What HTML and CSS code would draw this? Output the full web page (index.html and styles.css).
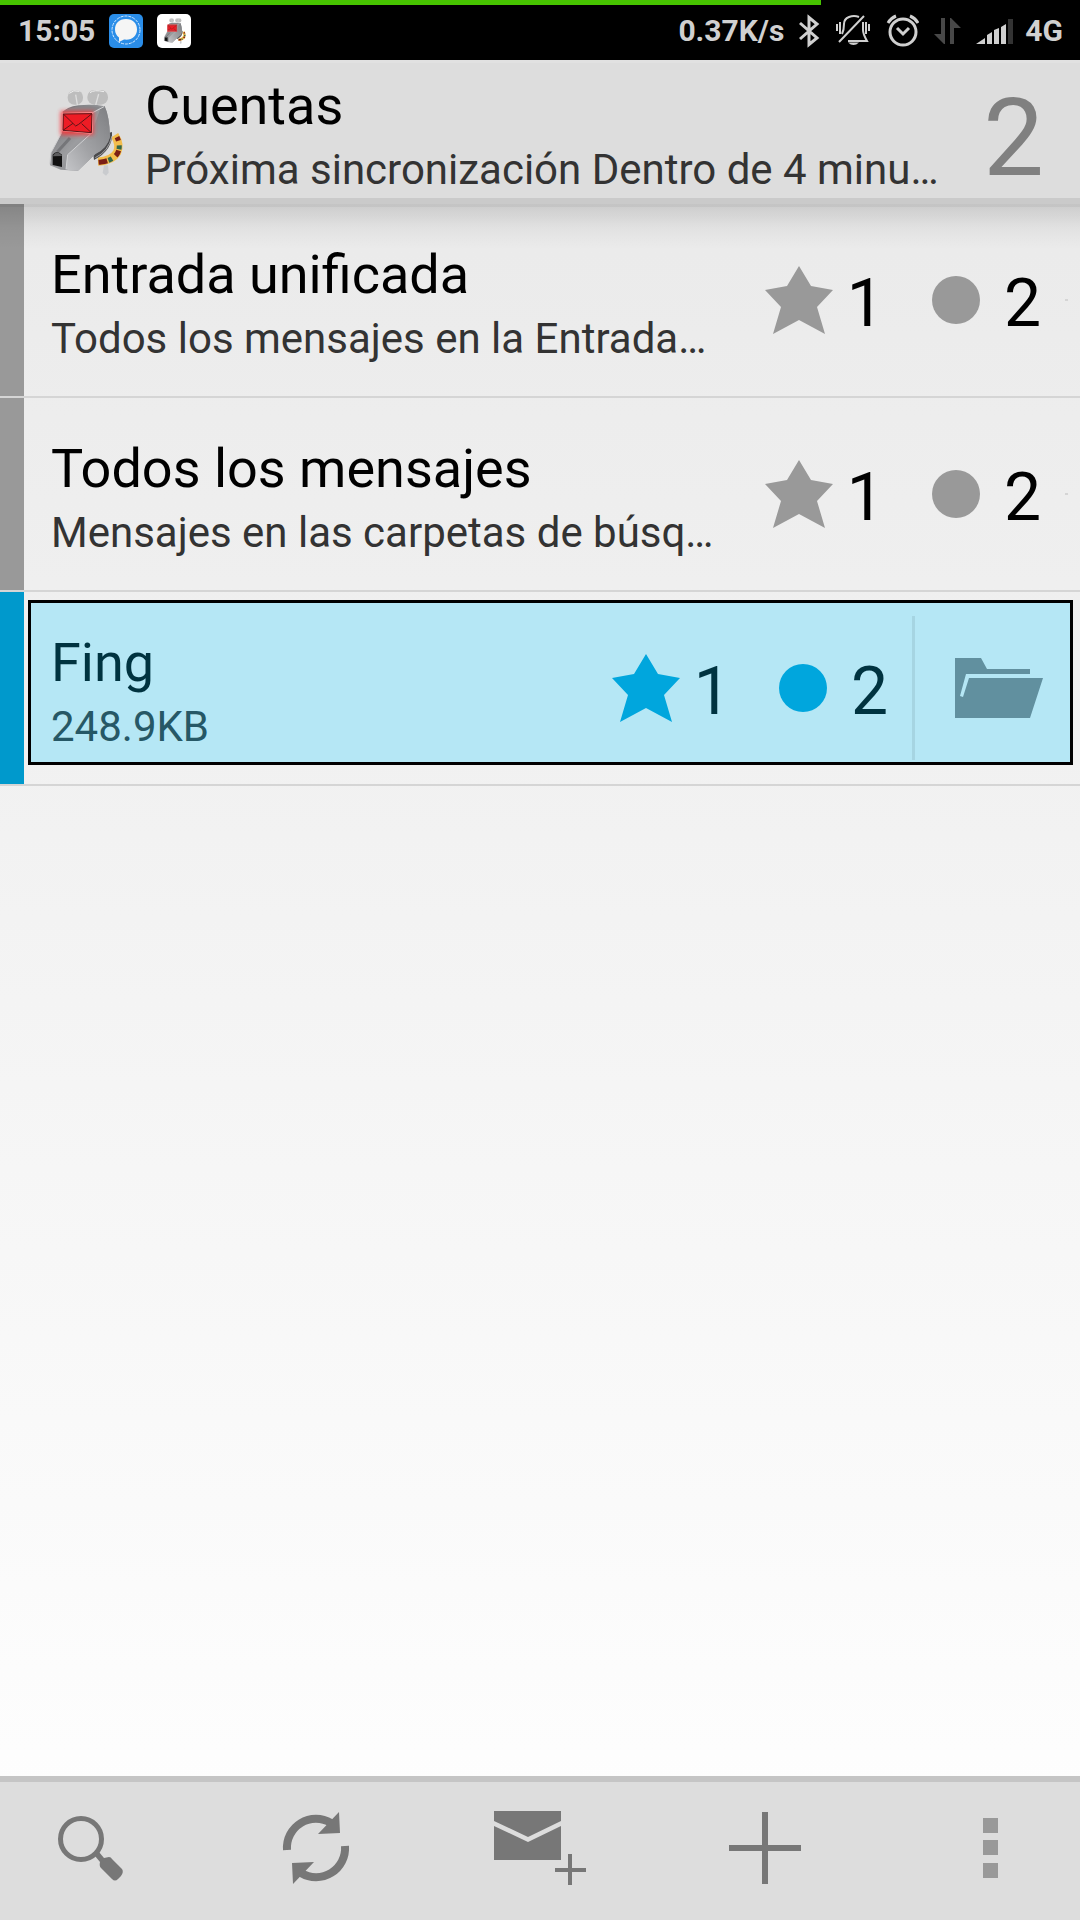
FILE: index.html
```html
<!DOCTYPE html>
<html lang="es">
<head>
<meta charset="utf-8">
<meta name="viewport" content="width=device-width">
<title>Cuentas</title>
<link rel="stylesheet" href="styles.css">
</head>
<body>
<svg class="defs" aria-hidden="true">
  <defs>
    <linearGradient id="metal" x1="0" y1="0" x2="1" y2="1">
      <stop offset="0" stop-color="#66666a"/><stop offset=".5" stop-color="#9c9da0"/><stop offset="1" stop-color="#77787b"/>
    </linearGradient>
    <linearGradient id="snout" x1="0" y1="1" x2="1" y2="0">
      <stop offset="0" stop-color="#c4c5c8"/><stop offset=".4" stop-color="#a2a3a6"/><stop offset="1" stop-color="#7c7d80"/>
    </linearGradient>
    <filter id="glow" x="-30%" y="-30%" width="160%" height="160%"><feGaussianBlur stdDeviation="7"/></filter>
    <symbol id="dog" viewBox="0 0 330 330">
      <g fill="#bdbdbd">
        <rect x="113" y="43" width="46" height="43" rx="20"/>
        <rect x="172" y="42" width="62" height="44" rx="21"/>
      </g>
      <path d="M118 52Q130 40 148 46M180 50Q192 40 222 47" fill="none" stroke="#f0f0f0" stroke-width="3"/>
      <path d="M137 56l6 36M206 54l-12 44" stroke="#dedede" stroke-width="4" fill="none"/>
      <path d="M222 268l12 0 2 22-8 9-10-8z" fill="#c9cbce"/>
      <path d="M254 178Q272 206 261 230Q247 254 204 257" fill="none" stroke="#f3bd4c" stroke-width="25"/>
      <path d="M257 176Q275 206 263 231Q249 256 204 259" fill="none" stroke="#7b1f16" stroke-width="15" stroke-dasharray="0 8 12 30 18 30 18"/>
      <path d="M257 176Q275 206 263 231Q249 256 204 259" fill="none" stroke="#32674a" stroke-width="15" stroke-dasharray="0 34 12 36 12 100"/>
      <path d="M246 168Q250 222 192 252L190 236L238 170z" fill="#4b4b4d"/>
      <path d="M196 245Q236 226 246 180" fill="none" stroke="#a2a2a4" stroke-width="3"/>
      <path d="M97 112Q108 92 146 88Q190 84 224 91Q238 120 240 182Q232 216 196 234L144 284L92 281L60 268L63 230L98 165z" fill="url(#metal)"/>
      <path d="M186 170L212 94L224 91Q238 120 240 182Q232 216 196 234L144 284Q112 284 108 280L112 238z" fill="url(#snout)"/>
      <path d="M97 108Q120 86 212 92L188 110z" fill="#87888b"/>
      <path d="M186 170L113 236L108 280M188 110L222 92" fill="none" stroke="#d1d2d4" stroke-width="3"/>
      <path d="M95 170L63 230L59 265" fill="none" stroke="#d0d0d2" stroke-width="3"/>
      <path d="M120 186L82 228" fill="none" stroke="#58585b" stroke-width="9" opacity=".5"/>
      <path d="M68 236Q80 220 96 236V273L68 267z" fill="#111"/>
      <path d="M68 241Q80 218 97 240z" fill="#5d5d5f"/>
      <rect x="92" y="105" width="99" height="72" fill="#ff3034" filter="url(#glow)" opacity=".85"/>
      <path d="M98 112L188 110L186 172L97 164z" fill="#ee1c25" stroke="#ff9b9b" stroke-width="3"/>
      <path d="M100 114L186 113L184 170L99 163zM100 114L137 150L146 145L186 113M99 163L129 142M184 170L155 143" fill="none" stroke="#5e1417" stroke-width="3"/>
    </symbol>
    <symbol id="star" viewBox="0 0 72 72">
      <path d="M36 2L48 22L70 26L54 43L62 70L36 56L10 70L18 43L2 26L24 22z" fill="currentColor"/>
    </symbol>
    <symbol id="dot" viewBox="0 0 72 72"><circle cx="36" cy="36" r="24" fill="currentColor"/></symbol>
  </defs>
</svg>

<div class="status">
  <div class="status-progress"></div>
  <div class="status-left">
    <span>15:05</span>
    <svg class="app" viewBox="0 0 34 34">
      <rect width="34" height="34" rx="5" fill="#2a8de8"/>
      <circle cx="17" cy="16" r="14" fill="none" stroke="#d5eaff" stroke-width="1" stroke-dasharray="3 1"/>
      <path d="M17 5C10 5 6 9.500 6 15.500C6 19 7.500 21.500 10 23.500L10 28L15 25.500C23 26.500 28 22 28 15.500C28 9.500 24 5 17 5z" fill="#f5f5f5"/>
    </svg>
    <svg class="app" viewBox="0 0 34 34">
      <rect width="34" height="34" rx="5" fill="#fff"/>
      <use href="#dog" x="1" y="0" width="33" height="33"/>
    </svg>
  </div>
  <div class="status-right">
    <span>0.37K/s</span>
    <svg width="22" height="34" viewBox="0 0 22 34"><path d="M1 9L18 24L10 30.500V3.500L18 10L1 25" fill="none" stroke="#d0d0d0" stroke-width="3"/></svg>
    <svg width="34" height="34" viewBox="0 0 34 34" fill="none" stroke="#d0d0d0" stroke-width="2">
      <path d="M1 10v7M4 8v12M33 10v7M30 8v12M28 2L3 28M6 20Q8 16 8 10Q8 5 13 3Q18 1 23 3M27 8L27 16Q27 20 31 27H12"/>
      <path d="M12 28.500h11q-5.500 5-11 0z" fill="#d0d0d0" stroke="none"/>
    </svg>
    <svg width="34" height="34" viewBox="0 0 34 34" fill="none" stroke="#d0d0d0" stroke-width="3">
      <circle cx="18" cy="18" r="13"/><path d="M12 14l6 6 6-6M3 9Q6 4 11 2M25 2Q30 4 33 9"/>
    </svg>
    <svg width="27" height="34" viewBox="0 0 27 34" fill="#484848"><path d="M7 4h4v26h-1L0 20h7zM16 4h1l10 10h-7v16h-4z"/></svg>
    <span class="network">
      <svg width="37" height="34" viewBox="0 0 37 34" fill="#d0d0d0"><path d="M0 30L9 24v6zM11 21l5-3v12h-5zM18 16l5-2v16h-5zM25 13l5-3v20h-5z"/><path d="M32 5h5v25h-5z" fill="#333"/></svg>
      <span>4G</span>
    </span>
  </div>
</div>

<header class="bar">
  <svg class="logo" role="img" aria-label="K-9 Mail"><use href="#dog"/></svg>
  <div class="bar-text">
    <h1 class="title">Cuentas</h1>
    <p class="sub">Próxima sincronización Dentro de 4 minu…</p>
  </div>
  <span class="total">2</span>
</header>

<main class="list">
  <div class="row">
    <a class="row-main" href="#unified">
      <span class="row-text"><span class="title">Entrada unificada</span><span class="sub">Todos los mensajes en la Entrada…</span></span>
      <span class="counts">
        <svg class="mark"><use href="#star"/></svg><span class="num">1</span>
        <svg class="mark mark-next"><use href="#dot"/></svg><span class="num">2</span>
      </span>
      <span class="tick"></span>
    </a>
  </div>
  <div class="row">
    <a class="row-main" href="#all">
      <span class="row-text"><span class="title">Todos los mensajes</span><span class="sub">Mensajes en las carpetas de búsq…</span></span>
      <span class="counts">
        <svg class="mark"><use href="#star"/></svg><span class="num">1</span>
        <svg class="mark mark-next"><use href="#dot"/></svg><span class="num">2</span>
      </span>
      <span class="tick"></span>
    </a>
  </div>
  <div class="row row-account">
    <div class="focus">
      <a class="row-main" href="#fing">
        <span class="row-text"><span class="title">Fing</span><span class="sub">248.9KB</span></span>
        <span class="counts">
          <svg class="mark"><use href="#star"/></svg><span class="num">1</span>
          <svg class="mark mark-next"><use href="#dot"/></svg><span class="num">2</span>
        </span>
      </a>
      <button class="folders" type="button" aria-label="Carpetas">
        <svg width="90" height="62" viewBox="0 0 90 62" fill="currentColor">
          <path d="M1 1H27L33 12H76V17H12L6 39L9 40L15 21H89L76 61H1z"/>
        </svg>
      </button>
    </div>
  </div>
</main>

<nav class="actions">
  <button type="button" aria-label="Buscar">
    <svg viewBox="0 0 96 96"><circle cx="39" cy="39" r="20.500" fill="none" stroke="currentColor" stroke-width="5"/><path d="M53 56L57 52L62 58L67 57Q69 57 70 59L80 69Q82 72 79 76L76 79Q73 82 70 79L59 68Q57 66 58 62z"/></svg>
  </button>
  <button type="button" aria-label="Sincronizar">
    <svg viewBox="0 0 96 96"><path d="M20 50A29 29 0 0 1 64 23M78 46A29 29 0 0 1 34 73" fill="none" stroke="currentColor" stroke-width="8"/><path d="M72 12L73 33L51 34zM26 84L25 63L47 62z"/></svg>
  </button>
  <button type="button" aria-label="Redactar">
    <svg viewBox="0 0 96 96"><path d="M2 11H69V21L36 37L2 21zM2 26L36 42L69 26V60H2zM76 54h4v14h14v4h-14v13h-4v-13h-13v-4h13z"/></svg>
  </button>
  <button type="button" aria-label="Añadir cuenta">
    <svg viewBox="0 0 96 96"><path d="M45 12h6v33h33v6h-33v33h-6v-33h-33v-6h33z"/></svg>
  </button>
  <button class="more" type="button" aria-label="Más opciones">
    <svg viewBox="0 0 96 96"><path d="M41 18h15v15h-15zM41 40h15v15h-15zM41 63h15v15h-15z"/></svg>
  </button>
</nav>
</body>
</html>
```
FILE: styles.css
```css
* {
  box-sizing: border-box;
}

body {
  margin: 0;
  min-height: 100vh;
  display: flex;
  flex-direction: column;
  background: linear-gradient(#e8e8e8, #fff);
  color: #000;
  font-family: Roboto, "Liberation Sans", sans-serif;
}

svg {
  display: block;
  flex: none;
}

button {
  margin: 0;
  padding: 0;
  border: 0;
  background: none;
}

.defs {
  position: absolute;
  width: 0;
  height: 0;
}

/* System status bar */
.status {
  position: relative;
  height: 60px;
  padding: 2px 17px 0 18px;
  display: flex;
  align-items: center;
  justify-content: space-between;
  background: #000;
  color: #d0d0d0;
  font-size: 30px;
  font-weight: 700;
  line-height: 36px;
}

.status-progress {
  position: absolute;
  top: 0;
  left: 0;
  width: 76%;
  height: 5px;
  background: #46c300;
}

.status-left {
  display: flex;
  align-items: center;
  gap: 14px;
}

.status-right {
  display: flex;
  align-items: center;
  gap: 15px;
}

.network {
  display: flex;
  align-items: center;
  gap: 12px;
}

.app {
  width: 34px;
  height: 34px;
}

/* Title bar */
.bar {
  position: relative;
  display: flex;
  align-items: center;
  height: 144px;
  padding: 0 36px 0 30px;
  gap: 5px;
  background: #ddd;
  border-top: 3px solid #e1e1e1;
  border-bottom: 6px solid #cacaca;
}

.bar::after {
  content: "";
  position: absolute;
  top: 141px;
  left: 0;
  right: 0;
  height: 42px;
  border-top: 3px solid rgba(0, 0, 0, 0.16);
  background: linear-gradient(rgba(0, 0, 0, 0.12), rgba(0, 0, 0, 0.04) 50%, transparent) padding-box;
  pointer-events: none;
}

.logo {
  width: 110px;
  height: 110px;
}

.bar-text {
  flex: 1;
  min-width: 0;
  padding-top: 7px;
}

.title {
  display: block;
  margin: 0;
  font-size: 54px;
  font-weight: 400;
  line-height: 72px;
  white-space: nowrap;
}

.sub {
  display: block;
  margin: 0;
  color: #333;
  font-size: 42px;
  line-height: 56px;
  white-space: nowrap;
}

.total {
  padding-top: 14px;
  color: #808080;
  font-size: 108px;
  line-height: 120px;
}

/* Account list */
.list {
  flex: 1;
}

.row {
  display: flex;
  height: 194px;
  border-bottom: 2px solid #d5d5d5;
}

.row::before {
  content: "";
  flex: none;
  width: 24px;
  background: #999;
}

.row-main {
  flex: 1;
  min-width: 0;
  display: flex;
  align-items: center;
  padding: 0 12px 0 27px;
  color: inherit;
  text-decoration: none;
}

.row-text {
  flex: 1;
  min-width: 0;
  padding-top: 5px;
}

.counts {
  display: flex;
  align-items: center;
  gap: 12px;
  margin-right: 24px;
}

.mark {
  width: 72px;
  height: 72px;
  color: #999;
}

.mark-next {
  margin-left: 24px;
}

.num {
  padding-top: 7px;
  font-size: 66px;
  line-height: 78px;
}

.tick {
  width: 3px;
  height: 2px;
  background: #d5d5d5;
}

.row-account::before {
  background: #09c;
}

.focus {
  flex: 1;
  min-width: 0;
  display: flex;
  margin: 8px 7px 19px 4px;
  padding-top: 11px;
  border: 3px solid #000;
  background: #b5e7f5;
  color: #003340;
}

.focus .row-main {
  padding: 0 0 0 20px;
}

.focus .sub {
  color: #265866;
}

.focus .mark {
  color: #00a6dd;
}

.folders {
  width: 158px;
  margin: 2px 0;
  padding-left: 12px;
  display: flex;
  align-items: center;
  justify-content: center;
  border-left: 3px solid #a6d5e2;
  color: #61909f;
}

/* Bottom action bar */
.actions {
  display: flex;
  justify-content: space-between;
  height: 144px;
  padding-bottom: 6px;
  background: #ddd;
  border-top: 6px solid #c5c5c5;
}

.actions button {
  width: 180px;
  display: flex;
  align-items: center;
  justify-content: center;
  color: #777;
}

.actions svg {
  width: 96px;
  height: 96px;
  fill: currentColor;
}

.actions .more {
  color: #999;
}
```
